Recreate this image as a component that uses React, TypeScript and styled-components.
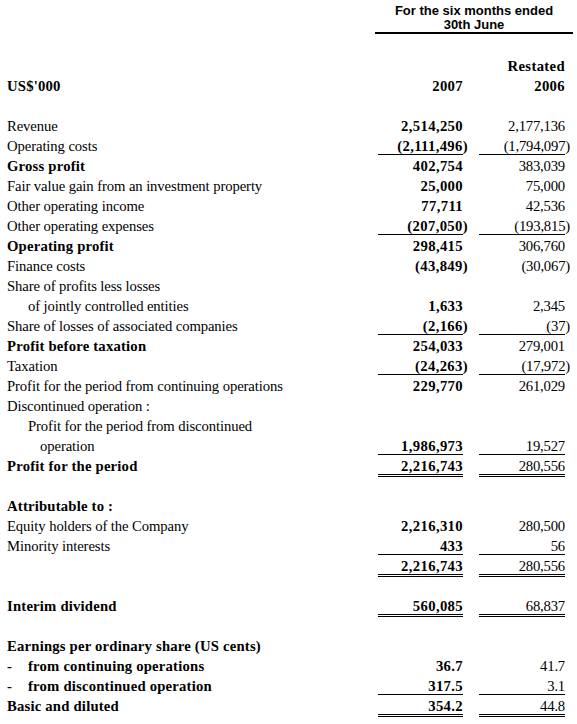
import React from "react";
import styled, { createGlobalStyle } from "styled-components";

const Global = createGlobalStyle`
  html, body { margin: 0; padding: 0; background: #fff; }
  body { font-family: "Liberation Serif", "Times New Roman", serif; color: #000; }
`;

const Page = styled.div`
  width: 577px;
  padding: 4px 0 8px 7px;
  box-sizing: border-box;
`;

const Title = styled.div`
  margin-left: 368px;
  width: 198px;
  font-family: "Liberation Sans", Arial, sans-serif;
  font-weight: bold;
  font-size: 13px;
  line-height: 14px;
  text-align: center;
  padding-bottom: 0;
  border-bottom: 2px solid #000;
`;

const Grid = styled.div<{ $top?: number }>`
  display: grid;
  grid-template-columns: 371px 85px 16px 86px;
  grid-auto-rows: 20px;
  margin-top: ${(p) => p.$top ?? 0}px;
  font-size: 14.7px;
`;

const Label = styled.div<{ $bold?: boolean; $indent?: number }>`
  grid-column: 1;
  line-height: 19px;
  white-space: nowrap;
  font-weight: ${(p) => (p.$bold ? "bold" : "normal")};
  letter-spacing: ${(p) => (p.$bold ? "0.2px" : "-0.1px")};
  padding-left: ${(p) => p.$indent ?? 0}px;
`;

const Dash = styled.span`
  display: inline-block;
  width: 21px;
`;

type Rule = "none" | "single" | "double";

const Amount = styled.div<{ $col: number; $bold?: boolean; $rule?: Rule }>`
  grid-column: ${(p) => p.$col};
  height: 17px;
  line-height: 19px;
  text-align: right;
  white-space: nowrap;
  font-weight: ${(p) => (p.$bold ? "bold" : "normal")};
  letter-spacing: ${(p) => (p.$bold ? "0.35px" : "-0.2px")};
  border-bottom: ${(p) =>
    p.$rule === "single"
      ? "1px solid #000"
      : p.$rule === "double"
      ? "3px double #000"
      : "0"};
`;

const Paren = styled.span`
  margin-right: -5px;
`;

type Row = {
  label?: string;
  bold?: boolean;
  indent?: number;
  dash?: boolean;
  a?: string;
  b?: string;
  rule?: Rule;
};

const rows: Row[] = [
  { label: "Revenue", a: "2,514,250", b: "2,177,136" },
  { label: "Operating costs", a: "(2,111,496)", b: "(1,794,097)", rule: "single" },
  { label: "Gross profit", bold: true, a: "402,754", b: "383,039" },
  { label: "Fair value gain from an investment property", a: "25,000", b: "75,000" },
  { label: "Other operating income", a: "77,711", b: "42,536" },
  { label: "Other operating expenses", a: "(207,050)", b: "(193,815)", rule: "single" },
  { label: "Operating profit", bold: true, a: "298,415", b: "306,760" },
  { label: "Finance costs", a: "(43,849)", b: "(30,067)" },
  { label: "Share of profits less losses" },
  { label: "of jointly controlled entities", indent: 21, a: "1,633", b: "2,345" },
  { label: "Share of losses of associated companies", a: "(2,166)", b: "(37)", rule: "single" },
  { label: "Profit before taxation", bold: true, a: "254,033", b: "279,001" },
  { label: "Taxation", a: "(24,263)", b: "(17,972)", rule: "single" },
  { label: "Profit for the period from continuing operations", a: "229,770", b: "261,029" },
  { label: "Discontinued operation :" },
  { label: "Profit for the period from discontinued", indent: 21 },
  { label: "operation", indent: 33, a: "1,986,973", b: "19,527", rule: "single" },
  { label: "Profit for the period", bold: true, a: "2,216,743", b: "280,556", rule: "double" },
  {},
  { label: "Attributable to :", bold: true },
  { label: "Equity holders of the Company", a: "2,216,310", b: "280,500" },
  { label: "Minority interests", a: "433", b: "56", rule: "single" },
  { a: "2,216,743", b: "280,556", rule: "double" },
  {},
  { label: "Interim dividend", bold: true, a: "560,085", b: "68,837", rule: "double" },
  {},
  { label: "Earnings per ordinary share (US cents)", bold: true },
  { label: "from continuing operations", bold: true, dash: true, a: "36.7", b: "41.7" },
  { label: "from discontinued operation", bold: true, dash: true, a: "317.5", b: "3.1", rule: "single" },
  { label: "Basic and diluted", bold: true, a: "354.2", b: "44.8", rule: "double" },
];

function Value({ v }: { v?: string }) {
  if (!v) return null;
  if (v.endsWith(")")) {
    return (
      <>
        {v.slice(0, -1)}
        <Paren>)</Paren>
      </>
    );
  }
  return <>{v}</>;
}

export default function App() {
  return (
    <Page>
      <Global />
      <Title>
        For the six months ended
        <br />
        30th June
      </Title>
      <Grid $top={23}>
        <Label />
        <Amount $col={2} />
        <Amount $col={4} $bold>
          Restated
        </Amount>
        <Label $bold>US$'000</Label>
        <Amount $col={2} $bold>
          2007
        </Amount>
        <Amount $col={4} $bold>
          2006
        </Amount>
        <Label />
      </Grid>
      <Grid>
        {rows.map((r, i) => (
          <React.Fragment key={i}>
            <Label $bold={r.bold} $indent={r.indent}>
              {r.dash && <Dash>-</Dash>}
              {r.label ?? "\u00a0"}
            </Label>
            <Amount $col={2} $bold $rule={r.a ? r.rule : "none"}>
              <Value v={r.a} />
            </Amount>
            <Amount $col={4} $rule={r.b ? r.rule : "none"}>
              <Value v={r.b} />
            </Amount>
          </React.Fragment>
        ))}
      </Grid>
    </Page>
  );
}
